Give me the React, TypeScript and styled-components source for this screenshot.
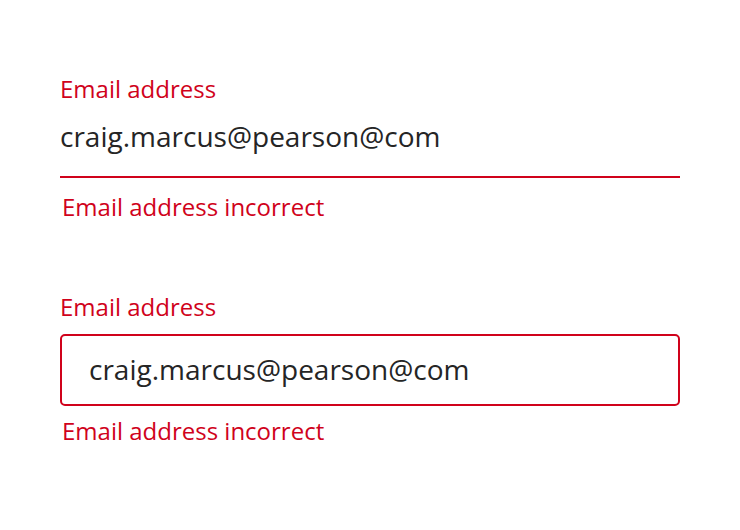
import React from "react";
import styled, { createGlobalStyle } from "styled-components";

const Global = createGlobalStyle`
  html, body { margin: 0; padding: 0; background: #ffffff; }
  body { font-family: "Open Sans", "Liberation Sans", sans-serif; }
  * { box-sizing: border-box; }
`;

const RED = "#d0021b";
const INK = "#252525";

const Page = styled.main`
  display: flex;
  flex-direction: column;
  gap: 70px;
  width: 740px;
  padding: 74px 60px 0 60px;
`;

const Field = styled.div`
  display: flex;
  flex-direction: column;
  width: 620px;
`;

const Label = styled.label`
  font-size: 24px;
  line-height: 30px;
  color: ${RED};
`;

const Input = styled.input<{ $variant: "underline" | "box" }>`
  display: block;
  width: 100%;
  font-family: "Open Sans", "Liberation Sans", sans-serif;
  font-size: 28px;
  color: ${INK};
  background: #ffffff;
  outline: none;
  margin: 0;
  ${(p) =>
    p.$variant === "underline"
      ? `
    margin-top: 12px;
    height: 62px;
    padding: 0 0 20px 0;
    border: none;
    border-bottom: 2px solid ${RED};
    border-radius: 0;
  `
      : `
    margin-top: 12px;
    height: 72px;
    padding: 0 27px 3px 27px;
    border: 2px solid ${RED};
    border-radius: 5px;
  `}
`;

const ErrorText = styled.div<{ $gap: number }>`
  margin-top: ${(p) => p.$gap}px;
  padding-left: 2px;
  font-size: 24px;
  line-height: 30px;
  color: ${RED};
`;

export default function App() {
  return (
    <>
      <Global />
      <Page>
        <Field>
          <Label htmlFor="email-1">Email address</Label>
          <Input
            id="email-1"
            $variant="underline"
            defaultValue="craig.marcus@pearson@com"
            aria-invalid="true"
          />
          <ErrorText $gap={14}>Email address incorrect</ErrorText>
        </Field>
        <Field>
          <Label htmlFor="email-2">Email address</Label>
          <Input
            id="email-2"
            $variant="box"
            defaultValue="craig.marcus@pearson@com"
            aria-invalid="true"
          />
          <ErrorText $gap={10}>Email address incorrect</ErrorText>
        </Field>
      </Page>
    </>
  );
}
